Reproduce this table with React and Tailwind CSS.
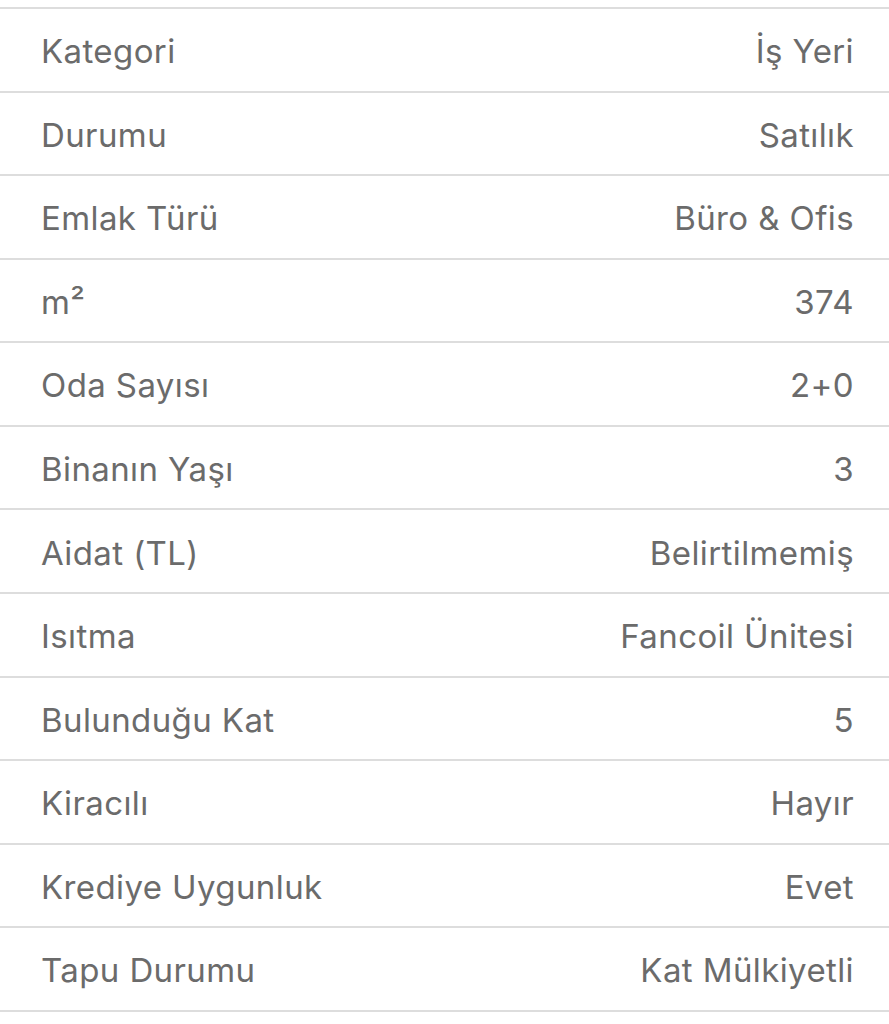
const rows = [
  ['Kategori', 'İş Yeri'],
  ['Durumu', 'Satılık'],
  ['Emlak Türü', 'Büro & Ofis'],
  ['m²', '374'],
  ['Oda Sayısı', '2+0'],
  ['Binanın Yaşı', '3'],
  ['Aidat (TL)', 'Belirtilmemiş'],
  ['Isıtma', 'Fancoil Ünitesi'],
  ['Bulunduğu Kat', '5'],
  ['Kiracılı', 'Hayır'],
  ['Krediye Uygunluk', 'Evet'],
  ['Tapu Durumu', 'Kat Mülkiyetli'],
]

export default function App() {
  return (
    <main className="min-h-screen w-full bg-white pt-[7px]" style={{ fontFamily: 'Inter, "Noto Sans", sans-serif' }}>
      <div className="border-t-2 border-[#dddddd]">
        {rows.map(([label, value]) => (
          <div
            key={label}
            className="flex h-[83.58px] items-center justify-between border-b-2 border-[#dddddd] pt-1 pl-[41px] pr-[35px] text-[33px] tracking-[0.012em] text-[#6b6b6b]"
          >
            <span>{label}</span>
            <span>{value}</span>
          </div>
        ))}
      </div>
    </main>
  )
}
